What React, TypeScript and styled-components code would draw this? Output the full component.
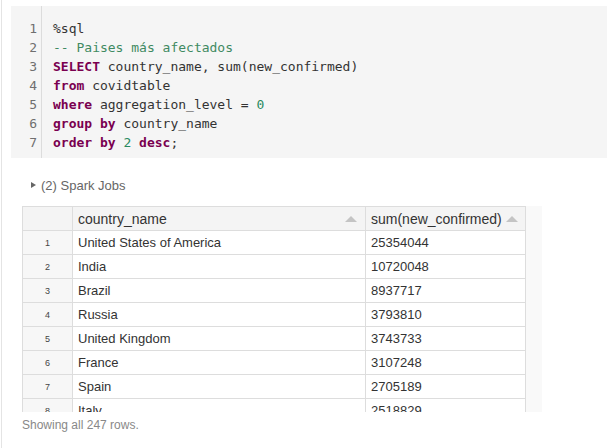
import React from "react";
import styled, { createGlobalStyle } from "styled-components";

const GlobalStyle = createGlobalStyle`
  html, body { margin: 0; padding: 0; background: #ffffff; }
  body { font-family: "Liberation Sans", Arial, sans-serif; }
`;

const Cell = styled.div`
  margin-left: 1px;
  border-left: 1px solid #e4e4e4;
  min-height: 448px;
  box-sizing: border-box;
  padding-top: 6px;
  overflow: hidden;
`;

const CodeBlock = styled.div`
  margin-left: 9px;
  background: #f5f5f5;
  display: flex;
  height: 152px;
  font-family: "DejaVu Sans Mono", "Liberation Mono", monospace;
  font-size: 13px;
  line-height: 19px;
`;

const Gutter = styled.div`
  width: 26px;
  padding-right: 4px;
  padding-top: 13px;
  border-right: 1px solid #dcdcdc;
  text-align: right;
  color: #6f6f6f;
`;

const Code = styled.div`
  padding-top: 13px;
  padding-left: 11px;
  color: #333333;
  white-space: pre;
`;

const Line = styled.div``;

const Kw = styled.span`
  color: #7a0050;
  font-weight: bold;
`;

const Comment = styled.span`
  color: #3f8a62;
`;

const Num = styled.span`
  color: #2a8a60;
`;

const SparkRow = styled.div`
  display: flex;
  align-items: center;
  margin-top: 18px;
  margin-left: 29px;
  height: 18px;
  font-size: 13px;
  color: #666666;
  gap: 5px;
`;

const Caret = styled.span`
  width: 0;
  height: 0;
  border-top: 3.5px solid transparent;
  border-bottom: 3.5px solid transparent;
  border-left: 5px solid #666666;
`;

const TableWrap = styled.div`
  margin-left: 20px;
  margin-top: 12px;
  width: 520px;
  height: 206px;
  overflow: hidden;
  background: #f9f9f9;
`;

const Table = styled.table`
  border-collapse: collapse;
  table-layout: fixed;
  width: 503px;
  background: #ffffff;
`;

const Th = styled.th`
  height: 24px;
  padding: 0 8px 0 5px;
  border: 1px solid #dddddd;
  background: #f4f4f4;
  font-size: 14px;
  font-weight: normal;
  color: #333333;
  text-align: left;
  box-sizing: border-box;
`;

const HeadInner = styled.div`
  display: flex;
  align-items: center;
  justify-content: space-between;
`;

const SortArrow = styled.span`
  width: 0;
  height: 0;
  border-left: 6px solid transparent;
  border-right: 6px solid transparent;
  border-bottom: 6px solid #c4c4c4;
  margin-left: 4px;
`;

const Td = styled.td`
  height: 24px;
  padding: 0 5px;
  border: 1px solid #dddddd;
  font-size: 13px;
  color: #333333;
  box-sizing: border-box;
  white-space: nowrap;
  overflow: hidden;
`;

const IndexTd = styled(Td)`
  background: #f7f7f7;
  font-size: 9px;
  text-align: center;
  color: #444444;
`;

const Footer = styled.div`
  margin-left: 20px;
  margin-top: 6px;
  font-size: 12px;
  color: #888888;
`;

const rows: [string, string][] = [
  ["United States of America", "25354044"],
  ["India", "10720048"],
  ["Brazil", "8937717"],
  ["Russia", "3793810"],
  ["United Kingdom", "3743733"],
  ["France", "3107248"],
  ["Spain", "2705189"],
  ["Italy", "2518829"],
];

export default function App() {
  return (
    <>
      <GlobalStyle />
      <Cell>
        <CodeBlock>
          <Gutter>
            {[1, 2, 3, 4, 5, 6, 7].map((n) => (
              <Line key={n}>{n}</Line>
            ))}
          </Gutter>
          <Code>
            <Line>%sql</Line>
            <Line>
              <Comment>-- Paises más afectados</Comment>
            </Line>
            <Line>
              <Kw>SELECT</Kw> country_name, sum(new_confirmed)
            </Line>
            <Line>
              <Kw>from</Kw> covidtable
            </Line>
            <Line>
              <Kw>where</Kw> aggregation_level = <Num>0</Num>
            </Line>
            <Line>
              <Kw>group</Kw> <Kw>by</Kw> country_name
            </Line>
            <Line>
              <Kw>order</Kw> <Kw>by</Kw> <Num>2</Num> <Kw>desc</Kw>;
            </Line>
          </Code>
        </CodeBlock>
        <SparkRow>
          <Caret />
          <span>(2) Spark Jobs</span>
        </SparkRow>
        <TableWrap>
          <Table>
            <colgroup>
              <col style={{ width: 50 }} />
              <col style={{ width: 293 }} />
              <col style={{ width: 160 }} />
            </colgroup>
            <thead>
              <tr>
                <Th />
                <Th>
                  <HeadInner>
                    <span>country_name</span>
                    <SortArrow />
                  </HeadInner>
                </Th>
                <Th>
                  <HeadInner>
                    <span>sum(new_confirmed)</span>
                    <SortArrow />
                  </HeadInner>
                </Th>
              </tr>
            </thead>
            <tbody>
              {rows.map(([c, v], i) => (
                <tr key={c}>
                  <IndexTd>{i + 1}</IndexTd>
                  <Td>{c}</Td>
                  <Td>{v}</Td>
                </tr>
              ))}
            </tbody>
          </Table>
        </TableWrap>
        <Footer>Showing all 247 rows.</Footer>
      </Cell>
    </>
  );
}
